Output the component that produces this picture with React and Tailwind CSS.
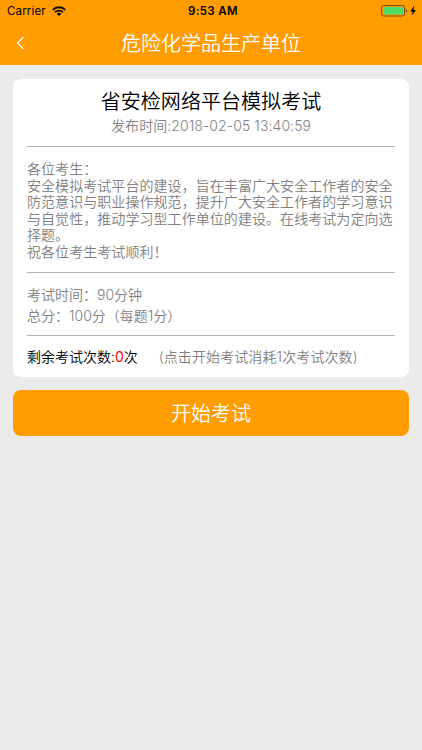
const notice = [
    "各位考生：",
    "安全模拟考试平台的建设，旨在丰富广大安全工作者的安全",
    "防范意识与职业操作规范，提升广大安全工作者的学习意识",
    "与自觉性，推动学习型工作单位的建设。在线考试为定向选",
    "择题。",
    "祝各位考生考试顺利！",
];

const StatusBar = () => (
    <div className="relative flex h-[21px] items-center justify-between pl-[7px] pr-[5px] text-[11.5px] text-black">
        <div className="flex items-center gap-[6px] pt-[2px]">
            <span className="tracking-[0.15px]">Carrier</span>
            <svg className="mb-[2px]" width="14" height="10" viewBox="0 0 14 10" fill="none" stroke="#000" strokeWidth="1.9">
                <path d="M.8 3.8a8.8 8.8 0 0 1 12.4 0" />
                <path d="M3.1 6.2a5.5 5.5 0 0 1 7.8 0" />
                <path d="M7 10 4.8 7.8a3.1 3.1 0 0 1 4.4 0Z" fill="#000" stroke="none" />
            </svg>
        </div>
        <span className="absolute left-[213px] top-[3px] -translate-x-1/2 whitespace-nowrap font-semibold tracking-[0.4px]">9:53 AM</span>
        <svg width="36" height="12" viewBox="0 0 36 12">
            <rect x="0.5" y="0.5" width="23" height="10.5" rx="2.2" fill="none" stroke="#000" strokeOpacity="0.5" />
            <rect x="2" y="2" width="20" height="7.5" rx="1" fill="#4cd964" />
            <path d="M25 4v3.6c1.5-.5 1.5-3.1 0-3.6Z" fill="#000" fillOpacity="0.6" />
            <path d="M33.2 .8 29.3 6.4h2.4L30.8 10.6l4.2-5.7h-2.5Z" fill="#000" />
        </svg>
    </div>
);

const App = () => {
    return (
        <div className="h-[750px] w-[422px] overflow-hidden bg-[#ebebeb] font-['Inter','Noto_Sans_CJK_SC',sans-serif] text-[#808080]">
            <header className="h-[65px] bg-[#ff9c00]">
                <StatusBar />
                <div className="relative flex h-11 items-center justify-center">
                    <svg className="absolute left-4" width="10" height="14" viewBox="0 0 10 14" fill="none" stroke="#fff" strokeWidth="1.2">
                        <path d="M7.5 1 1.5 7l6 6" />
                    </svg>
                    <h1 className="pt-[2px] text-[20px] font-[350] text-white">危险化学品生产单位</h1>
                </div>
            </header>

            <main className="px-[13px] pt-[14px]">
                <section className="h-[298px] rounded-lg bg-white px-[14px] pt-[9px]">
                    <h2 className="text-center text-[20px] font-[350] leading-7 tracking-[0.05px] text-black">省安检网络平台模拟考试</h2>
                    <p className="text-center text-[14px] font-[350] leading-5 tracking-[0.08px]">发布时间:2018-02-05 13:40:59</p>
                    <div className="mt-[10px] border-t border-[#b2b2b2] pt-[14px] text-[14px] font-[350] leading-[16.5px] tracking-[0.06px]">
                        {notice.map((line) => (
                            <p key={line} className="whitespace-nowrap">{line}</p>
                        ))}
                    </div>
                    <div className="mt-3 border-t border-[#b2b2b2] pt-[11px] text-[14px] font-[350] leading-[21px]">
                        <p>考试时间：90分钟</p>
                        <p>总分：100分（每题1分）</p>
                    </div>
                    <div className="mt-[9px] flex gap-[21px] border-t border-[#b2b2b2] pt-[11px] text-[14px] font-[350] leading-5">
                        <p className="text-black">
                            剩余考试次数:<span className="font-normal text-[#f00]">0</span>次
                        </p>
                        <p className="tracking-[0.1px]">(点击开始考试消耗1次考试次数)</p>
                    </div>
                </section>

                <button className="mt-[13px] h-[46px] w-full rounded-lg bg-[#ff9c00] pt-[2px] text-[20px] font-[350] text-white">
                    开始考试
                </button>
            </main>
        </div>
    );
};

export default App;
